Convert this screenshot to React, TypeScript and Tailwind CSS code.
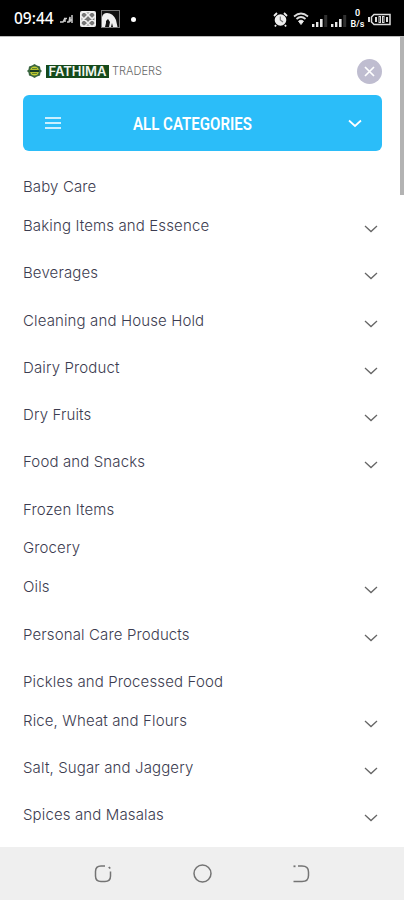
import React from "react";

type Category = {
  name: string;
  expandable?: boolean;
};

const categories: Category[] = [
  { name: "Baby Care" },
  { name: "Baking Items and Essence", expandable: true },
  { name: "Beverages", expandable: true },
  { name: "Cleaning and House Hold", expandable: true },
  { name: "Dairy Product", expandable: true },
  { name: "Dry Fruits", expandable: true },
  { name: "Food and Snacks", expandable: true },
  { name: "Frozen Items" },
  { name: "Grocery" },
  { name: "Oils", expandable: true },
  { name: "Personal Care Products", expandable: true },
  { name: "Pickles and Processed Food" },
  { name: "Rice, Wheat and Flours", expandable: true },
  { name: "Salt, Sugar and Jaggery", expandable: true },
  { name: "Spices and Masalas", expandable: true },
];

const Signal = () => (
  <svg width="16" height="13" viewBox="0 0 16 13" fill="#e8e8e8">
    <rect x="0" y="10" width="2.4" height="3" />
    <rect x="4" y="8" width="2.4" height="5" />
    <rect x="8" y="5" width="2.6" height="8" />
    <rect x="12.2" y="1" width="3" height="12" fill="#303030" />
  </svg>
);

const StatusBar = () => (
  <div className="flex h-9 shrink-0 items-center bg-black pt-0.5 text-white font-['Noto_Sans',sans-serif]">
    <span className="ml-3.5 w-[41px] whitespace-nowrap text-[15.5px] font-medium leading-none">
      09:44
    </span>
    <svg className="ml-[5px]" width="13" height="10" viewBox="0 0 13 10" fill="none" stroke="#ccc" strokeWidth="1.5">
      <path d="M0 8h3l2-4v4M4 4.500h3M7 8h2l1-5v5M12 1v8M9 6h3" />
    </svg>
    <svg className="ml-[7px]" width="16" height="16" viewBox="0 0 16 16">
      <rect width="16" height="16" rx="2" fill="#777" />
      <g fill="none" stroke="#f0f0f0" strokeWidth="1.6">
        <path d="M0 4l4-4 12 12-4 4L0 4M0 12L12 0l4 4L4 16l-4-4" />
        <rect x="0.800" y="0.800" width="14.400" height="14.400" rx="1.500" />
      </g>
    </svg>
    <svg className="ml-[5px]" width="19" height="18" viewBox="0 0 19 18">
      <rect x="0.5" y="0.5" width="18" height="17" fill="#111" stroke="#777" />
      <path d="M1 17V7q1-4 5-4 6 0 9 7l1.500 7H12l-1-4-1 4H8l1-5-2-3-2 2v2l-1 4z" fill="#f0f0f0" />
    </svg>
    <span className="ml-[11px] h-[5px] w-[5px] rounded-full bg-white" />
    <svg className="ml-auto" width="15" height="15" viewBox="0 0 15 15">
      <circle cx="7.5" cy="8" r="5.8" fill="#eee" />
      <path d="M1 4l3-3M14 4l-3-3M3 13l-1 1.500M12 13l1 1.500" stroke="#eee" strokeWidth="1.8" />
      <path d="M7.300 4.500V8l2.700 2" fill="none" stroke="#777" strokeWidth="1.2" />
    </svg>
    <svg className="ml-[5px]" width="16" height="14" viewBox="0 0 16 14" fill="none" stroke="#ddd" strokeWidth="1.7">
      <path d="M1 4.500q7-6 14 0M3.500 7q4.500-4 9 0" />
      <path d="M5.500 9.200q2.500-2.200 5 0L8 12.500z" fill="#eee" strokeWidth="1" />
    </svg>
    <div className="ml-[3px] flex gap-[3px] pt-0.5">
      <Signal />
      <Signal />
    </div>
    <div className="ml-[3px] flex w-[15px] flex-col items-center font-['Roboto',sans-serif] font-semibold">
      <span className="text-[9px] leading-[11px]">0</span>
      <span className="text-[9px] leading-[11px]">B/s</span>
    </div>
    <svg className="ml-[3px] mr-[13px]" width="23" height="13" viewBox="0 0 23 13" fill="none" stroke="#ddd">
      <path d="M1 4v5" strokeWidth="2" />
      <path d="M6 1.500h16v10H6L3.500 9V4z" strokeWidth="1.500" />
      <path d="M8 4v5M19 4v5" strokeWidth="2" />
      <rect x="11" y="3.500" width="1.500" height="6" />
      <rect x="14.500" y="3.500" width="1.500" height="6" />
    </svg>
  </div>
);

const Logo = () => (
  <div className="flex items-center">
    <svg width="15" height="14" viewBox="0 0 15 14">
      <path d="M7.500 0l2.500 1.500 3 1 .5 3L15 7l-1.500 1.500-.5 3-3 1L7.500 14 5 12.500l-3-1-.5-3L0 7l1.500-1.500.5-3 3-1z" fill="#3b6640" />
      <circle cx="7.500" cy="7" r="4.500" fill="#c6cf32" />
      <path d="M3 7h9" stroke="#173c22" strokeWidth="2.200" />
      <path d="M5 4.500h5M5 9.500h5" stroke="#5d8230" />
    </svg>
    <div className="ml-1 flex h-[13px] w-[63px] items-center justify-center bg-[#154a1b]">
      <svg width="63" height="13" className="font-['Inter',sans-serif]">
        <text x="2.5" y="11" textLength="58" lengthAdjust="spacingAndGlyphs" fontSize="12.5" fontWeight="600" fill="#f2f6f0">
          FATHIMA
        </text>
      </svg>
    </div>
    <svg width="54" height="16" className="font-['Inter',sans-serif]">
      <text x="3" y="12" textLength="50" lengthAdjust="spacingAndGlyphs" fontSize="11.5" fontWeight="300" fill="#666">
        TRADERS
      </text>
    </svg>
  </div>
);

const CategoryRow = ({ name, expandable }: Category) => (
  <li className={`flex items-start justify-between ${expandable ? "h-[47.25px]" : "h-[38.9px]"}`}>
    <span className="whitespace-nowrap text-[15px] font-light leading-6 tracking-[0.13px]">{name}</span>
    {expandable && (
      <svg className="mr-1 mt-[11px]" width="14" height="8" viewBox="0 0 14 8" fill="none" stroke="#666" strokeWidth="1.3">
        <path d="M1 1l6 5.500L13 1" />
      </svg>
    )}
  </li>
);

const NavBar = () => (
  <div className="flex h-[53px] shrink-0 items-center justify-center gap-[79px] bg-[#efefef]">
    <svg width="20" height="20" viewBox="0 0 20 20" fill="none" stroke="#747474" strokeWidth="1.500">
      <path d="M12 2H8Q2.500 2 2.500 7.500v4.500q0 5.500 5.500 5.500h4q5.500 0 5.500-5.500V7.500" />
      <path d="M15.800 3l1.400 1.500" strokeWidth="1.800" />
    </svg>
    <svg width="20" height="20" viewBox="0 0 20 20" fill="none" stroke="#747474" strokeWidth="1.500">
      <circle cx="10.500" cy="9.500" r="8.500" />
    </svg>
    <svg width="20" height="20" viewBox="0 0 20 20" fill="none" stroke="#747474" strokeWidth="1.500">
      <path d="M7 2h4q6.500 0 6.500 6v3.500q0 6-6.500 6H2.500" />
      <path d="M2.500 2.300h2" strokeWidth="1.800" />
    </svg>
  </div>
);

const App = () => {
  return (
    <div className="flex h-[900px] w-[404px] flex-col overflow-hidden bg-white font-['Inter',sans-serif]">
      <StatusBar />
      <div className="flex min-h-0 flex-1 border-t border-[#bbb]">
        <div className="ml-[23px] w-[359px] overflow-hidden">
          <div className="mt-[21px] flex h-[26px] items-center justify-between pl-1">
            <Logo />
            <button className="flex h-[25px] w-[25px] items-center justify-center rounded-full bg-[#bfbdd0]">
              <svg width="11" height="11" viewBox="0 0 11 11" stroke="#fff" strokeWidth="1.700">
                <path d="M1 1l9 9M10 1l-9 9" />
              </svg>
            </button>
          </div>
          <button className="mt-[11px] flex h-14 w-full items-center rounded-md bg-[#2bbdf9] pl-[22px] pr-5 text-white">
            <svg width="16" height="12" viewBox="0 0 16 12" stroke="#fff" strokeWidth="1.500">
              <path d="M0 1h16M0 6h16M0 11h16" />
            </svg>
            <svg width="126" height="28" className="ml-[70px] font-['Roboto',sans-serif]">
              <text x="2" y="20.500" textLength="119" lengthAdjust="spacingAndGlyphs" fontSize="18" fontWeight="600" fill="#fff">
                ALL CATEGORIES
              </text>
            </svg>
            <svg className="ml-auto" width="14" height="9" viewBox="0 0 14 9" fill="none" stroke="#fff" strokeWidth="1.700">
              <path d="M1 1.500l6 5.500 6-5.500" />
            </svg>
          </button>
          <ul className="mt-[24.2px] text-[#3c3c50]">
            {categories.map((category) => (
              <CategoryRow key={category.name} {...category} />
            ))}
          </ul>
        </div>
        <div className="ml-auto h-[158px] w-1 bg-[#b3b3b3]" />
      </div>
      <NavBar />
    </div>
  );
};

export default App;
